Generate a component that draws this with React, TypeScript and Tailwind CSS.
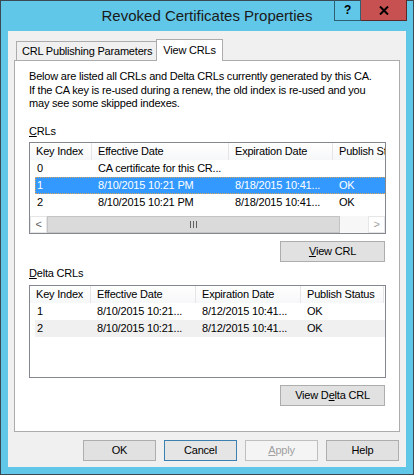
import React from 'react';

type Col = { label: string; w: number };

const crlCols: Col[] = [
  { label: 'Key Index', w: 62 },
  { label: 'Effective Date', w: 137 },
  { label: 'Expiration Date', w: 104 },
  { label: 'Publish Status', w: 90 },
];

const crlRows = [
  ['0', 'CA certificate for this CR...', '', ''],
  ['1', '8/10/2015 10:21 PM', '8/18/2015 10:41...', 'OK'],
  ['2', '8/10/2015 10:21 PM', '8/18/2015 10:41...', 'OK'],
];

const deltaCols: Col[] = [
  { label: 'Key Index', w: 61 },
  { label: 'Effective Date', w: 105 },
  { label: 'Expiration Date', w: 105 },
  { label: 'Publish Status', w: 83 },
];

const deltaRows = [
  ['1', '8/10/2015 10:21...', '8/12/2015 10:41...', 'OK'],
  ['2', '8/10/2015 10:21...', '8/12/2015 10:41...', 'OK'],
];

function ListView({
  cols,
  rows,
  selected,
  shaded,
  scrollbar,
  height,
}: {
  cols: Col[];
  rows: string[][];
  selected?: number;
  shaded?: number;
  scrollbar?: boolean;
  height: string;
}) {
  return (
    <div className={`w-[357px] ${height} border border-[#828790] bg-white flex flex-col overflow-hidden`}>
      <div className="flex h-[17px] shrink-0">
        {cols.map((c) => (
          <div
            key={c.label}
            style={{ width: c.w }}
            className="shrink-0 h-full border-r border-[#e5e5e5] bg-gradient-to-b from-white to-[#f6f7f8] pl-[6px] leading-[17px] whitespace-nowrap overflow-hidden"
          >
            {c.label}
          </div>
        ))}
      </div>
      {rows.map((r, i) => {
        const sel = i === selected;
        const shade = i === shaded;
        return (
          <div key={i} className="flex h-[17px] shrink-0 pl-[5px]">
            <div
              className={`flex flex-1 h-full ${
                sel
                  ? 'bg-[#3399ff] text-white outline-1 outline-dotted outline-[#d9a35a] -outline-offset-1'
                  : shade
                  ? 'bg-[#f0f0f0]'
                  : ''
              }`}
            >
              {r.map((cell, j) => (
                <div
                  key={j}
                  style={{ width: j === 0 ? cols[0].w - 5 : cols[j].w }}
                  className={`shrink-0 leading-[17px] whitespace-nowrap overflow-hidden ${j === 0 ? 'pl-[2px]' : 'pl-[6px]'}`}
                >
                  {cell}
                </div>
              ))}
            </div>
          </div>
        );
      })}
      {scrollbar && (
        <div className="mt-auto flex h-[17px] shrink-0 bg-[#f0f0f0]">
          <div className="w-[17px] h-full border border-[#e6e6e6] bg-white flex items-center justify-center text-[#606060] text-[11px]">
            &lt;
          </div>
          <div className="w-[293px] h-full bg-[#dadada] border border-[#c4c4c4] flex items-center justify-center">
            <div className="flex gap-[2px]">
              <div className="w-px h-[7px] bg-[#606060]" />
              <div className="w-px h-[7px] bg-[#606060]" />
              <div className="w-px h-[7px] bg-[#606060]" />
            </div>
          </div>
          <div className="flex-1 bg-[#f7f7f7]" />
          <div className="w-[17px] h-full border border-[#e6e6e6] bg-white flex items-center justify-center text-[#a0a0a0] text-[11px]">
            &gt;
          </div>
        </div>
      )}
    </div>
  );
}

function Btn({
  children,
  width,
  variant,
}: {
  children: React.ReactNode;
  width: string;
  variant?: 'focus' | 'disabled';
}) {
  const look =
    variant === 'focus'
      ? 'border-[#3c7fb1] bg-[#e5e5e5] text-black'
      : variant === 'disabled'
      ? 'border-[#bfbfbf] bg-[#f4f4f4] text-[#a0a0a0]'
      : 'border-[#adadad] bg-[#e1e1e1] text-black';
  return (
    <div className={`${width} h-[21px] border ${look} flex items-center justify-center leading-none`}>
      {children}
    </div>
  );
}

export default function App() {
  return (
    <div className="w-[414px] h-[475px] bg-[#61c7e9] border border-[#3b4a52] flex flex-col font-['Liberation_Sans',Arial,sans-serif] text-[11px] tracking-[-0.2px] text-black">
      {/* title bar */}
      <div className="relative h-[30px] shrink-0 flex items-center justify-center">
        <span className="text-[15px] tracking-normal text-[#1a1a1a] pt-[1px]">Revoked Certificates Properties</span>
        <div className="absolute top-[-1px] right-[6px] flex h-[21px]">
          <div className="w-[27px] h-full border border-t-0 border-[#2f5f73] flex items-center justify-center font-bold text-[12px] text-black">
            ?
          </div>
          <div className="w-[46px] h-full bg-[#c75050] border border-t-0 border-l-0 border-[#5a2a2a] flex items-center justify-center">
            <svg width="10" height="9" viewBox="0 0 10 9">
              <path d="M1 0.5 L9 8.5 M9 0.5 L1 8.5" stroke="#000" strokeWidth="2" />
            </svg>
          </div>
        </div>
      </div>

      {/* client area */}
      <div className="mx-[7px] h-[436px] bg-[#f0f0f0] flex flex-col px-[6px]">
        {/* tabs */}
        <div className="flex items-end h-[29px] pl-[2px] shrink-0 relative z-10">
          <div className="h-[19px] pl-[5px] pr-[4px] border border-b-0 border-[#acacac] bg-[#f0f0f0] leading-[18px]">
            CRL Publishing Parameters
          </div>
          <div className="h-[22px] -mb-px px-[6px] border border-b-0 border-[#acacac] bg-white leading-[20px] -ml-px">
            View CRLs
          </div>
        </div>

        {/* panel */}
        <div className="h-[372px] border border-[#acacac] bg-white pl-[14px] pt-[9px] flex flex-col">
          <p className="leading-[13.5px]">
            Below are listed all CRLs and Delta CRLs currently generated by this CA.
            <br />
            If the CA key is re-used during a renew, the old index is re-used and you
            <br />
            may see some skipped indexes.
          </p>

          <div className="mt-[13px] leading-[14px]">
            <span className="underline">C</span>RLs
          </div>
          <div className="mt-[4px]">
            <ListView cols={crlCols} rows={crlRows} selected={1} scrollbar height="h-[92px]" />
          </div>
          <div className="w-[357px] flex justify-end mt-[7px] pr-[1px]">
            <Btn width="w-[105px]">
              <span>
                <span className="underline">V</span>iew CRL
              </span>
            </Btn>
          </div>

          <div className="mt-[4px] leading-[14px]">
            <span className="underline">D</span>elta CRLs
          </div>
          <div className="mt-[5px]">
            <ListView cols={deltaCols} rows={deltaRows} shaded={1} height="h-[93px]" />
          </div>
          <div className="w-[357px] flex justify-end mt-[7px] pr-[1px]">
            <Btn width="w-[105px]">
              <span>
                View D<span className="underline">e</span>lta CRL
              </span>
            </Btn>
          </div>
        </div>

        {/* dialog buttons */}
        <div className="flex justify-end gap-[8px] mt-[8px] -mr-[6px] pr-[7px]">
          <Btn width="w-[73px]">OK</Btn>
          <Btn width="w-[73px]" variant="focus">
            Cancel
          </Btn>
          <Btn width="w-[73px]" variant="disabled">
            <span>
              <span className="underline">A</span>pply
            </span>
          </Btn>
          <Btn width="w-[73px]">Help</Btn>
        </div>
      </div>
    </div>
  );
}
